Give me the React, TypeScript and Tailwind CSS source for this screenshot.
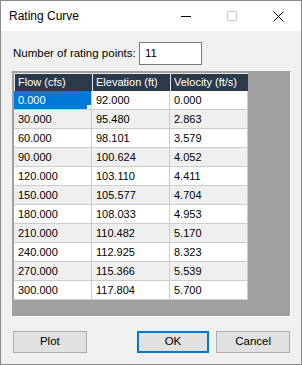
import React from 'react';

const rows: [string, string, string][] = [
  ['0.000', '92.000', '0.000'],
  ['30.000', '95.480', '2.863'],
  ['60.000', '98.101', '3.579'],
  ['90.000', '100.624', '4.052'],
  ['120.000', '103.110', '4.411'],
  ['150.000', '105.577', '4.704'],
  ['180.000', '108.033', '4.953'],
  ['210.000', '110.482', '5.170'],
  ['240.000', '112.925', '8.323'],
  ['270.000', '115.366', '5.539'],
  ['300.000', '117.804', '5.700'],
];

const headers = ['Flow (cfs)', 'Elevation (ft)', 'Velocity (ft/s)'];

export default function App() {
  return (
    <div
      className="w-[302px] h-[365px] flex flex-col bg-[#f0f0f0] border border-[#8a8a8a] text-[11.5px] text-black"
      style={{ fontFamily: '"Liberation Sans", Arial, sans-serif' }}
    >
      {/* title bar */}
      <div className="h-[30px] bg-white flex items-center shrink-0">
        <span className="ml-[8px] text-[12px]">Rating Curve</span>
        <div className="ml-auto flex items-center h-full">
          <div className="w-[46px] h-full flex items-center justify-center">
            <div className="w-[10px] h-px bg-black" />
          </div>
          <div className="w-[46px] h-full flex items-center justify-center">
            <div className="w-[10px] h-[10px] border border-[#cccccc]" />
          </div>
          <div className="w-[46px] h-full flex items-center justify-center">
            <svg width="11" height="11" viewBox="0 0 11 11">
              <path d="M0.5 0.5 L10.5 10.5 M10.5 0.5 L0.5 10.5" stroke="#000" strokeWidth="1" />
            </svg>
          </div>
        </div>
      </div>

      <div className="flex flex-col px-[11px]">
        {/* rating points */}
        <div className="flex items-center mt-[11px] h-[23px]">
          <span className="w-[127px] shrink-0 whitespace-nowrap pl-px">Number of rating points:</span>
          <div className="w-[63px] h-[23px] bg-white border border-[#7a7a7a] flex items-center pl-[5px]">11</div>
        </div>

        {/* grid */}
        <div className="mt-[6px] w-[279px] h-[246px] bg-[#a0a0a0] border border-[#a0a0a0] border-r-white border-b-white p-px">
          <div className="grid grid-cols-[78px_78px_78px] text-[11px]">
            {headers.map((h) => (
              <div
                key={h}
                className="h-[18px] bg-[#2b3a4b] text-white border-t border-l border-[#e8e8e8] flex items-center pl-[3px] whitespace-nowrap"
              >
                {h}
              </div>
            ))}
            {rows.map((r, i) =>
              r.map((c, j) => {
                const sel = i === 0 && j === 0;
                return (
                  <div
                    key={`${i}-${j}`}
                    className={`relative h-[19px] border-b border-r border-[#cccccc] flex items-center pl-[4px] ${
                      sel ? 'bg-[#0078d7] text-white' : i % 2 === 1 ? 'bg-[#efefef]' : 'bg-white'
                    }`}
                  >
                    {c}
                    {sel && <div className="absolute right-0 bottom-0 w-[4px] h-[4px] bg-white" />}
                  </div>
                );
              })
            )}
          </div>
        </div>

        {/* buttons */}
        <div className="flex items-center mt-[14px] h-[22px]">
          <button className="ml-[1px] w-[74px] h-[22px] bg-[#e1e1e1] border border-[#adadad]">Plot</button>
          <button className="ml-[50px] w-[73px] h-[22px] bg-[#e1e1e1] border-2 border-[#0078d7]">OK</button>
          <button className="ml-[7px] w-[74px] h-[22px] bg-[#e1e1e1] border border-[#adadad]">Cancel</button>
        </div>
      </div>
    </div>
  );
}
